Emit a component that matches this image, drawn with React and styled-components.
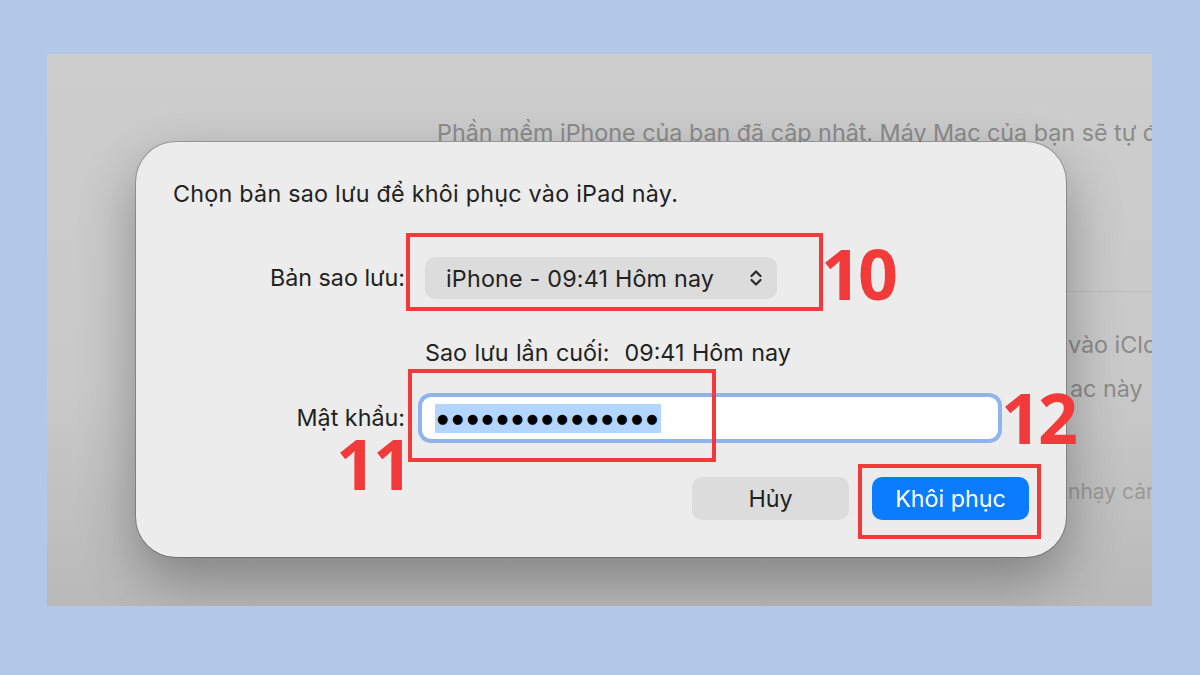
import React from 'react';
import styled, { createGlobalStyle } from 'styled-components';

const GlobalStyle = createGlobalStyle`
  html, body {
    margin: 0;
    padding: 0;
    background: #b3c8e9;
  }
  body {
    font-family: Inter, "Noto Sans", "Liberation Sans", sans-serif;
  }
`;

const Page = styled.div`
  position: relative;
  width: 1200px;
  height: 675px;
  padding: 54px 0 0 47px;
  box-sizing: border-box;
  overflow: hidden;
`;

// cua so macOS phia sau hop thoai
const Screen = styled.div`
  position: relative;
  width: 1105px;
  height: 552px;
  overflow: hidden;
  background: linear-gradient(180deg, #cdcdcd 0%, #c9c9c9 60%, #b9b9b9 100%);
`;

const Backdrop = styled.div`
  display: flex;
  flex-direction: column;
  padding-top: 65px;
  color: #8b8b8b;
  font-size: 23.3px;
  line-height: 28px;
  white-space: nowrap;
`;

const BackLine = styled.div`
  margin-left: ${(p) => p.$indent}px;
  margin-top: ${(p) => p.$gap || 0}px;
  font-size: ${(p) => p.$size || 23.3}px;
  color: ${(p) => p.$color || '#8b8b8b'};
`;

const Divider = styled.div`
  margin: 144px 0 0 1019px;
  height: 1px;
  background: #bcbcbc;
`;

const Dialog = styled.div`
  position: absolute;
  left: 89px;
  top: 88px;
  width: 930px;
  height: 415px;
  box-sizing: border-box;
  padding: 39px 37px 37px;
  display: flex;
  flex-direction: column;
  background: #ececec;
  border-radius: 40px;
  box-shadow: 0 0 0 1px rgba(0, 0, 0, 0.22), 0 22px 55px rgba(0, 0, 0, 0.32);
  color: #222;
  font-size: 23.3px;
`;

const Title = styled.div`
  line-height: 26px;
  margin-bottom: 50px;
  letter-spacing: 0.25px;
`;

const Form = styled.div`
  display: grid;
  grid-template-columns: 232px 1fr;
  column-gap: 20px;
  align-items: center;
`;

const Label = styled.div`
  text-align: right;
  line-height: 26px;
  margin-top: ${(p) => p.$gap || 0}px;
`;

const Select = styled.div`
  width: 352px;
  height: 42px;
  box-sizing: border-box;
  padding: 0 14px 0 21px;
  display: flex;
  align-items: center;
  justify-content: space-between;
  background: #dcdcdc;
  border-radius: 10px;
  letter-spacing: 0.2px;
`;

const Info = styled.div`
  grid-column: 2;
  line-height: 26px;
  margin-top: 41px;
  word-spacing: 1px;
`;

const Field = styled.div`
  margin: 31px 0 0 -3px;
  width: 576px;
  height: 42px;
  box-sizing: border-box;
  padding: 0 13px;
  display: flex;
  align-items: center;
  background: #fff;
  border-radius: 9px;
  box-shadow: 0 0 0 4px #8fb3ef;
`;

const Selected = styled.span`
  display: inline-block;
  height: 29px;
  line-height: 29px;
  padding-left: 2px;
  background: #b4d6fe;
  color: #000;
  font-family: "DejaVu Sans", sans-serif;
  font-size: 13px;
  letter-spacing: 3.6px;
`;

const Actions = styled.div`
  margin-top: 38px;
  display: flex;
  justify-content: flex-end;
  gap: 23px;
`;

const Button = styled.div`
  width: 157px;
  height: 43px;
  display: flex;
  align-items: center;
  justify-content: center;
  border-radius: 10px;
  background: ${(p) => (p.$primary ? '#0a7cfd' : '#dcdcdc')};
  color: ${(p) => (p.$primary ? '#fff' : '#222')};
`;

// khung do va so chu thich
const Mark = styled.div`
  position: absolute;
  left: ${(p) => p.$x}px;
  top: ${(p) => p.$y}px;
  width: ${(p) => p.$w}px;
  height: ${(p) => p.$h}px;
  box-sizing: border-box;
  border: 4px solid #f23a3a;
`;

const Num = styled.div`
  position: absolute;
  left: ${(p) => p.$x}px;
  top: ${(p) => p.$y}px;
  color: #f23a3a;
  font-family: "Open Sans", sans-serif;
  font-weight: 700;
  font-size: 70px;
  line-height: 54px;
  letter-spacing: -3px;
`;

const UpDown = () => (
  <svg width="14" height="20" viewBox="0 0 14 20" fill="none" stroke="#2a2a2a" strokeWidth="2.2" strokeLinecap="round" strokeLinejoin="round">
    <path d="M2.5 8 L7 3.5 L11.5 8" />
    <path d="M2.5 12 L7 16.5 L11.5 12" />
  </svg>
);

export default function App() {
  return (
    <>
      <GlobalStyle />
      <Page>
        <Screen>
          <Backdrop>
            <BackLine $indent={390}>Phần mềm iPhone của bạn đã cập nhật. Máy Mac của bạn sẽ tự động kiểm tra</BackLine>
            <Divider />
            <BackLine $indent={1021} $gap={39}>vào iCloud</BackLine>
            <BackLine $indent={1023} $gap={16}>ac này</BackLine>
            <BackLine $indent={1021} $gap={75} $size={21} $color="#9a9a9a">nhạy cảm</BackLine>
          </Backdrop>

          <Dialog>
            <Title>Chọn bản sao lưu để khôi phục vào iPad này.</Title>
            <Form>
              <Label>Bản sao lưu:</Label>
              <Select>
                <span>iPhone - 09:41 Hôm nay</span>
                <UpDown />
              </Select>
              <Info>Sao lưu lần cuối:&nbsp; 09:41 Hôm nay</Info>
              <Label $gap={31}>Mật khẩu:</Label>
              <Field>
                <Selected>●●●●●●●●●●●●●●●</Selected>
              </Field>
            </Form>
            <Actions>
              <Button>Hủy</Button>
              <Button $primary>Khôi phục</Button>
            </Actions>
          </Dialog>
        </Screen>

        <Mark $x={406} $y={233} $w={417} $h={78} />
        <Mark $x={408} $y={369} $w={308} $h={93} />
        <Mark $x={858} $y={464} $w={183} $h={75} />
        <Num $x={821} $y={246}>10</Num>
        <Num $x={336} $y={436}>11</Num>
        <Num $x={1001} $y={390}>12</Num>
      </Page>
    </>
  );
}
